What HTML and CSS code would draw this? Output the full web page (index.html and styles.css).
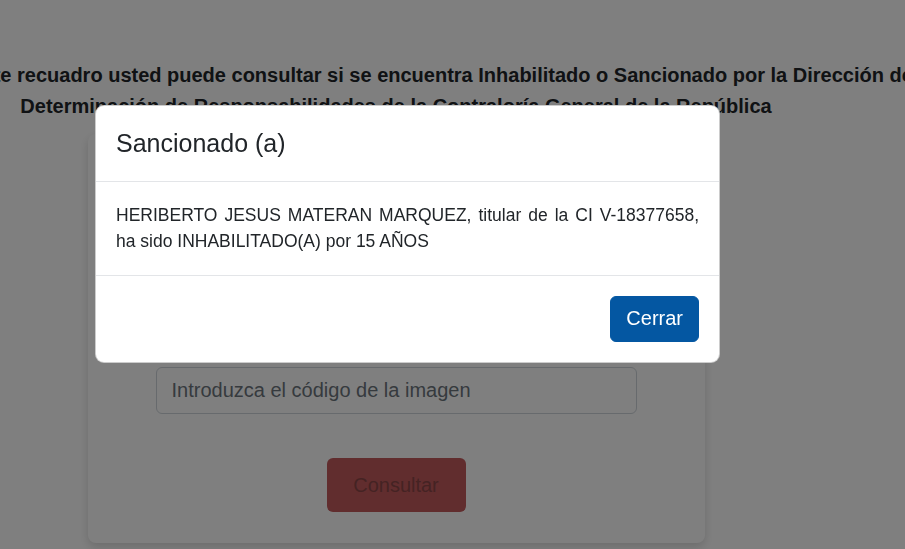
FILE: index.html
```html
<!DOCTYPE html>
<html lang="es">
<head>
    <meta charset="UTF-8">
    <meta name="viewport" content="width=device-width, initial-scale=1.0">
    <title>Consulta de Inhabilitados</title>
    <link rel="stylesheet" href="styles.css">
</head>
<body>
    <div class="wrap">
        <h4 class="intro">Mediante este recuadro usted puede consultar si se encuentra Inhabilitado o Sancionado por la Dirección de Determinación de Responsabilidades de la Contraloría General de la República</h4>

        <form class="card">
            <input type="text" class="field" placeholder="Introduzca su número de cédula">
            <div class="captcha"></div>
            <input type="text" class="field" placeholder="Introduzca el código de la imagen">
            <button type="button" class="btn-consultar">Consultar</button>
        </form>
    </div>

    <div class="backdrop"></div>
    <div class="modal">
        <div class="modal-content">
            <div class="modal-header">
                <h5 class="modal-title">Sancionado (a)</h5>
            </div>
            <div class="modal-body">
                <p>HERIBERTO JESUS MATERAN MARQUEZ, titular de la CI V-18377658, ha sido INHABILITADO(A) por 15 AÑOS</p>
            </div>
            <div class="modal-footer">
                <button type="button" class="btn-cerrar">Cerrar</button>
            </div>
        </div>
    </div>
</body>
</html>
```

FILE: styles.css
```css
body {
    font-family: 'Liberation Sans', Arial, sans-serif;
    margin: 0;
    background-color: #fff;
    color: #212529;
    overflow: hidden;
    height: 549px;
}

.wrap {
    width: 1040px;
    margin-left: -124px;
    text-align: center;
}

.intro {
    font-size: 20px;
    font-weight: 700;
    line-height: 31px;
    margin: 60px 0 0;
}

.card {
    width: 617px;
    margin: 12px auto 0;
    padding: 40px 68px 31px;
    box-sizing: border-box;
    background-color: #fff;
    border-radius: 8px;
    box-shadow: 0 4px 10px rgba(0, 0, 0, 0.15);
    display: flex;
    flex-direction: column;
    align-items: center;
}

.field {
    width: 100%;
    height: 47px;
    padding: 0 15px;
    border: 1px solid #ced4da;
    border-radius: 6px;
    box-sizing: border-box;
    font-family: inherit;
    font-size: 20px;
    color: #495057;
}

.field::placeholder {
    color: #6c757d;
}

.captcha {
    height: 106px;
    margin: 20px 0;
}

.btn-consultar {
    margin-top: 44px;
    width: 139px;
    height: 54px;
    background-color: #c35b5d;
    border: none;
    border-radius: 6px;
    color: #8a4647;
    font-family: inherit;
    font-size: 20px;
}

.backdrop {
    position: fixed;
    inset: 0;
    background-color: rgba(0, 0, 0, 0.5);
}

.modal {
    position: fixed;
    inset: 0;
    padding: 105px 0 0 95px;
}

.modal-content {
    width: 625px;
    background-color: #fff;
    border: 1px solid rgba(0, 0, 0, 0.2);
    border-radius: 9px;
    box-sizing: border-box;
}

.modal-header {
    padding: 20px 20px;
    border-bottom: 1px solid #e3e5e8;
}

.modal-title {
    margin: 0;
    font-size: 25px;
    font-weight: 400;
    line-height: 35px;
}

.modal-body {
    padding: 20px 20px;
}

.modal-body p {
    margin: 0;
    font-size: 17.5px;
    line-height: 26.25px;
    text-align: justify;
}

.modal-footer {
    display: flex;
    justify-content: flex-end;
    padding: 15px;
    border-top: 1px solid #e3e5e8;
}

.btn-cerrar {
    margin: 5px;
    height: 46px;
    padding: 0 15px;
    background-color: #0457a2;
    border: 1px solid #0457a2;
    border-radius: 6px;
    color: #fff;
    font-family: inherit;
    font-size: 20px;
}
```
